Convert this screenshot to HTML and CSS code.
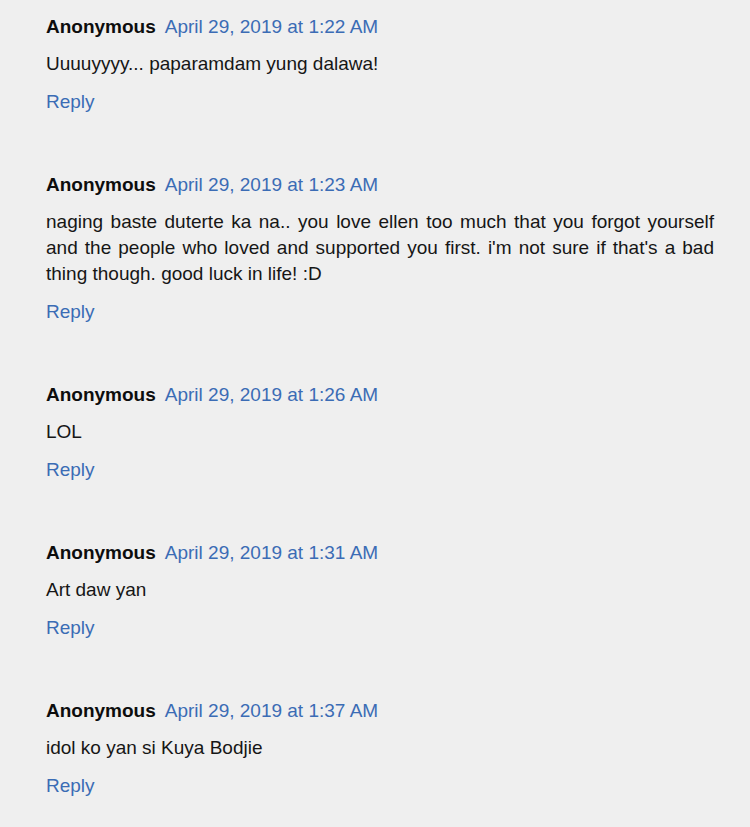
FILE: index.html
```html
<html>
  <head>
    <title>Comments</title>
    <meta charset="UTF-8" />
    <link rel="stylesheet" href="styles.css">
  </head>
  <body>
    <div id="comments">
      <div class="comment">
        <div class="comment-header">
          <span class="user">Anonymous</span>
          <a class="date" href="#">April 29, 2019 at 1:22 AM</a>
        </div>
        <p class="content">Uuuuyyyy... paparamdam yung dalawa!</p>
        <a class="reply" href="#">Reply</a>
      </div>

      <div class="comment">
        <div class="comment-header">
          <span class="user">Anonymous</span>
          <a class="date" href="#">April 29, 2019 at 1:23 AM</a>
        </div>
        <p class="content">naging baste duterte ka na.. you love ellen too much that you forgot yourself and the people who loved and supported you first. i'm not sure if that's a bad thing though. good luck in life! :D</p>
        <a class="reply" href="#">Reply</a>
      </div>

      <div class="comment">
        <div class="comment-header">
          <span class="user">Anonymous</span>
          <a class="date" href="#">April 29, 2019 at 1:26 AM</a>
        </div>
        <p class="content">LOL</p>
        <a class="reply" href="#">Reply</a>
      </div>

      <div class="comment">
        <div class="comment-header">
          <span class="user">Anonymous</span>
          <a class="date" href="#">April 29, 2019 at 1:31 AM</a>
        </div>
        <p class="content">Art daw yan</p>
        <a class="reply" href="#">Reply</a>
      </div>

      <div class="comment">
        <div class="comment-header">
          <span class="user">Anonymous</span>
          <a class="date" href="#">April 29, 2019 at 1:37 AM</a>
        </div>
        <p class="content">idol ko yan si Kuya Bodjie</p>
        <a class="reply" href="#">Reply</a>
      </div>
    </div>
  </body>
</html>
```

FILE: styles.css
```css
body {
  margin: 0;
  background-color: #efefef;
  font-family: "Liberation Sans", Arial, sans-serif;
  font-size: 19px;
  line-height: 25px;
  color: #161616;
}

a {
  color: #3b6cb5;
  text-decoration: none;
}

#comments {
  padding: 14px 36px 0 46px;
}

.comment {
  margin-bottom: 58px;
}

.comment-header {
  display: flex;
  gap: 9px;
}

.user {
  font-weight: bold;
  color: #0d0d0d;
}

.content {
  margin: 12px 0;
  line-height: 26px;
  text-align: justify;
}

.reply {
  display: inline-block;
}
```
